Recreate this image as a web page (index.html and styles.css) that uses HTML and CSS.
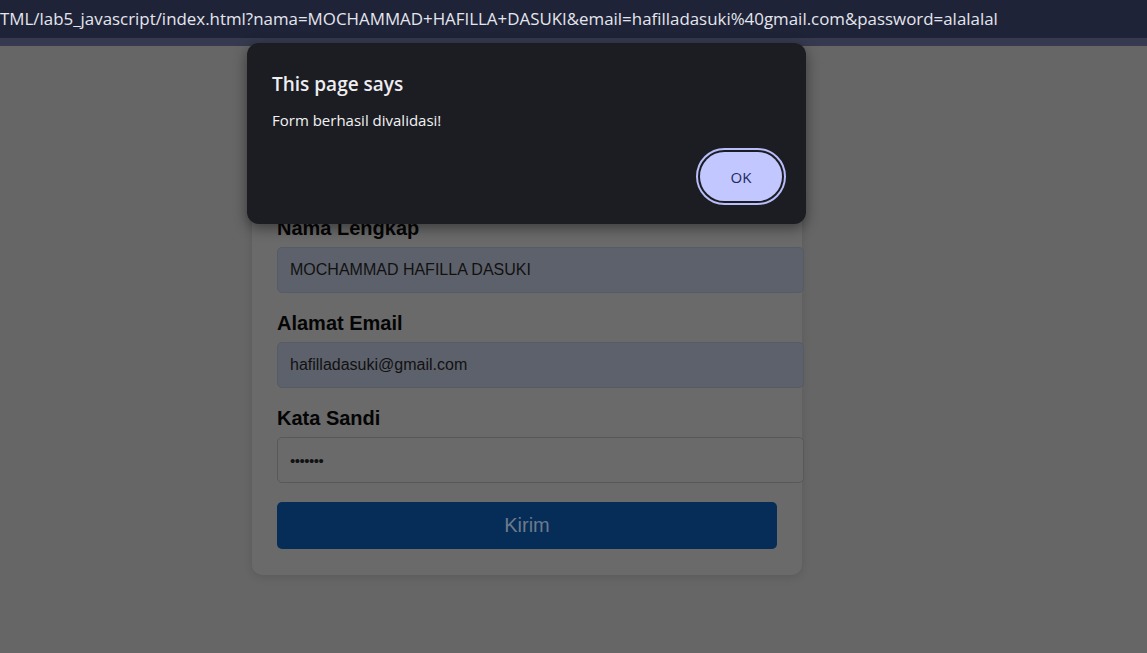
FILE: index.html
```html
<!DOCTYPE html>
<html lang="id">
<head>
<meta charset="utf-8">
<title>Lab 5 JavaScript</title>
<link rel="stylesheet" href="styles.css">
</head>
<body>
<header class="addressbar">
  <div class="url">TML/lab5_javascript/index.html?nama=MOCHAMMAD+HAFILLA+DASUKI&amp;email=hafilladasuki%40gmail.com&amp;password=alalalal</div>
</header>
<div class="strip"></div>
<main class="page">
  <form class="card">
    <div class="group">
      <label class="label">Nama Lengkap</label>
      <div class="input autofill">MOCHAMMAD HAFILLA DASUKI</div>
    </div>
    <div class="group">
      <label class="label">Alamat Email</label>
      <div class="input autofill">hafilladasuki@gmail.com</div>
    </div>
    <div class="group">
      <label class="label">Kata Sandi</label>
      <div class="input password">•••••••</div>
    </div>
    <div class="submit">Kirim</div>
  </form>
</main>
<div class="dialog">
  <div class="dialog-title">This page says</div>
  <div class="dialog-msg">Form berhasil divalidasi!</div>
  <div class="dialog-actions">
    <div class="ok-ring"><div class="ok">OK</div></div>
  </div>
</div>
</body>
</html>
```
FILE: styles.css
```css
* { box-sizing: border-box; }
html, body { margin: 0; padding: 0; }
body {
  background: #666666;
  width: 1147px;
  height: 653px;
  overflow: hidden;
  font-family: "Liberation Sans", Arial, sans-serif;
}
.addressbar {
  height: 38px;
  background: #1f2337;
  display: flex;
  align-items: center;
}
.url {
  font-family: "Open Sans", "Noto Sans", sans-serif;
  font-size: 16.9px;
  color: #e4e6ee;
  white-space: nowrap;
  padding-bottom: 1px;
}
.strip {
  height: 8px;
  background: #363a4f;
}
.page {
  padding: 146px 0 0 252px;
}
.card {
  width: 550px;
  background: #6a6a6a;
  border-radius: 10px;
  padding: 25px 25px 26px;
  box-shadow: 0 2px 8px rgba(0,0,0,0.12);
}
.group { margin-bottom: 19px; }
.label {
  display: block;
  font-size: 20px;
  line-height: 23px;
  font-weight: bold;
  color: #050505;
  margin-bottom: 7px;
}
.input {
  width: 527px;
  height: 46px;
  padding: 0 12px;
  display: flex;
  align-items: center;
  font-size: 16px;
  color: #111;
  border: 1px solid #585858;
  border-radius: 5px;
}
.autofill {
  background: #5d616b;
  border-color: #575b63;
}
.password {
  background: #6a6a6a;
  letter-spacing: -0.5px;
  font-size: 15px;
}
.submit {
  margin-top: 1px;
  width: 500px;
  height: 47px;
  background: #062c58;
  border-radius: 5px;
  color: #6c7b8c;
  font-size: 20px;
  display: flex;
  align-items: center;
  justify-content: center;
}
.dialog {
  position: absolute;
  left: 247px;
  top: 43px;
  width: 559px;
  height: 181px;
  background: #1c1d22;
  border-radius: 12px;
  box-shadow: 0 4px 14px rgba(0,0,0,0.45);
  padding: 27px 20px 19px 25px;
  font-family: "Open Sans", "Noto Sans", sans-serif;
  display: flex;
  flex-direction: column;
}
.dialog-title {
  font-size: 19px;
  font-weight: 600;
  color: #eeeef2;
  line-height: 28px;
}
.dialog-msg {
  margin-top: 11px;
  font-size: 15px;
  color: #f2f2f4;
  line-height: 22px;
}
.dialog-actions {
  margin-top: auto;
  display: flex;
  justify-content: flex-end;
}
.ok-ring {
  width: 90px;
  height: 57px;
  border-radius: 29px;
  border: 2px solid #b8befa;
  padding: 2px;
  background: #1c1d22;
}
.ok {
  width: 100%;
  height: 100%;
  border-radius: 25px;
  background: #c2c8ff;
  color: #1d2a5c;
  font-size: 15px;
  font-weight: 500;
  display: flex;
  align-items: center;
  justify-content: center;
}
```
